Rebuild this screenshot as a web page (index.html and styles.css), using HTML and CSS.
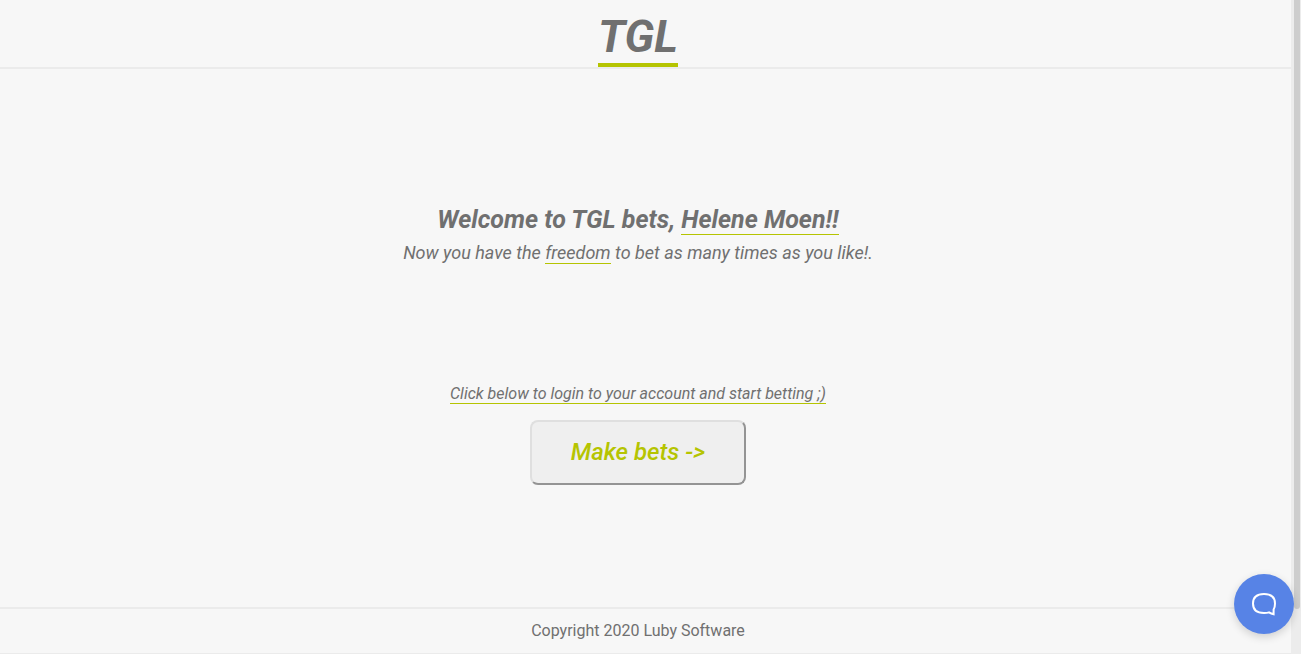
FILE: index.html
```html
<!DOCTYPE html>
<html lang="en">
<head>
<meta charset="utf-8">
<title>TGL</title>
<link rel="stylesheet" href="styles.css">
</head>
<body>
<div class="page">
  <header class="header"><h1 class="logo">TGL</h1></header>
  <main class="main">
    <section class="welcome">
      <h2 class="title">Welcome to TGL bets, <span class="marked">Helene Moen!!</span></h2>
      <p class="subtitle">Now you have the <span class="marked">freedom</span> to bet as many times as you like!.</p>
    </section>
    <section class="action">
      <p class="hint marked">Click below to login to your account and start betting ;)</p>
      <button class="bet-button" type="button">Make bets -&gt;</button>
    </section>
  </main>
  <footer class="footer">Copyright 2020 Luby Software</footer>
</div>
<div class="scroll-track"><div class="scroll-thumb"></div></div>
<button class="chat" type="button" aria-label="Open chat">
  <svg width="28" height="28" viewBox="0 0 28 28" fill="none" stroke="#fff" stroke-width="2"><path d="M23.600 24.200V19.500C24.500 18 25 16 25 13.500C25 7.500 21.500 4 14 4S3 7.500 3 13.500S6.500 23 14 23C16 23 17.700 22.800 19 22.400C20.500 23.300 22 23.900 23.600 24.200Z"/></svg>
</button>
</body>
</html>
```
FILE: styles.css
```css
* {
  box-sizing: border-box;
  margin: 0;
  padding: 0;
}

html {
  height: 100%;
  background: #fff;
}

body {
  display: flex;
  height: 100%;
  padding-bottom: 4px;
  font-family: Roboto, sans-serif;
  font-size: 16px;
  color: #707070;
}

.page {
  flex: 1;
  display: flex;
  flex-direction: column;
  background: #f7f7f7;
  border-bottom: 1px solid #ebebeb;
}

.header {
  display: flex;
  justify-content: center;
  padding: 10px 15px 0 0;
  border-bottom: 2px solid #ebebeb;
}

.logo {
  font-size: 45px;
  line-height: 53px;
  font-style: italic;
  font-weight: 700;
  border-bottom: 4px solid #b5c401;
}

.main {
  flex: 1;
  display: flex;
  flex-direction: column;
  align-items: center;
  justify-content: center;
  gap: 115px;
  padding: 12px 15px 0 0;
  font-style: italic;
  text-align: center;
}

.marked {
  border-bottom: 1px solid #b5c401;
}

.title {
  font-size: 25px;
  line-height: 34px;
  font-weight: 700;
}

.subtitle {
  font-size: 18px;
  line-height: 32px;
}

.action {
  display: flex;
  flex-direction: column;
  align-items: center;
  gap: 16px;
}

.hint {
  line-height: 19px;
}

.bet-button {
  padding: 16px 39px;
  border: 2px solid;
  border-color: #dfdfdf #949494 #949494 #dfdfdf;
  border-radius: 8px;
  background: #efefef;
  color: #b5c401;
  font: italic 500 24px/29px Roboto, sans-serif;
}

.footer {
  padding: 10px 15px 10px 0;
  border-top: 2px solid #ebebeb;
  line-height: 24px;
  text-align: center;
}

.scroll-track {
  width: 10px;
  padding: 0 1px 0 3px;
  background: #ececec;
}

.scroll-thumb {
  height: 609px;
  border-radius: 0 0 3px 3px;
  background: #cdcdcd;
}

.chat {
  position: fixed;
  right: 7px;
  bottom: 24px;
  display: flex;
  align-items: center;
  justify-content: center;
  width: 60px;
  height: 60px;
  border: 0;
  border-radius: 50%;
  background: #5783e6;
  box-shadow: 0 3px 8px rgba(0, 0, 0, 0.16);
}
```
